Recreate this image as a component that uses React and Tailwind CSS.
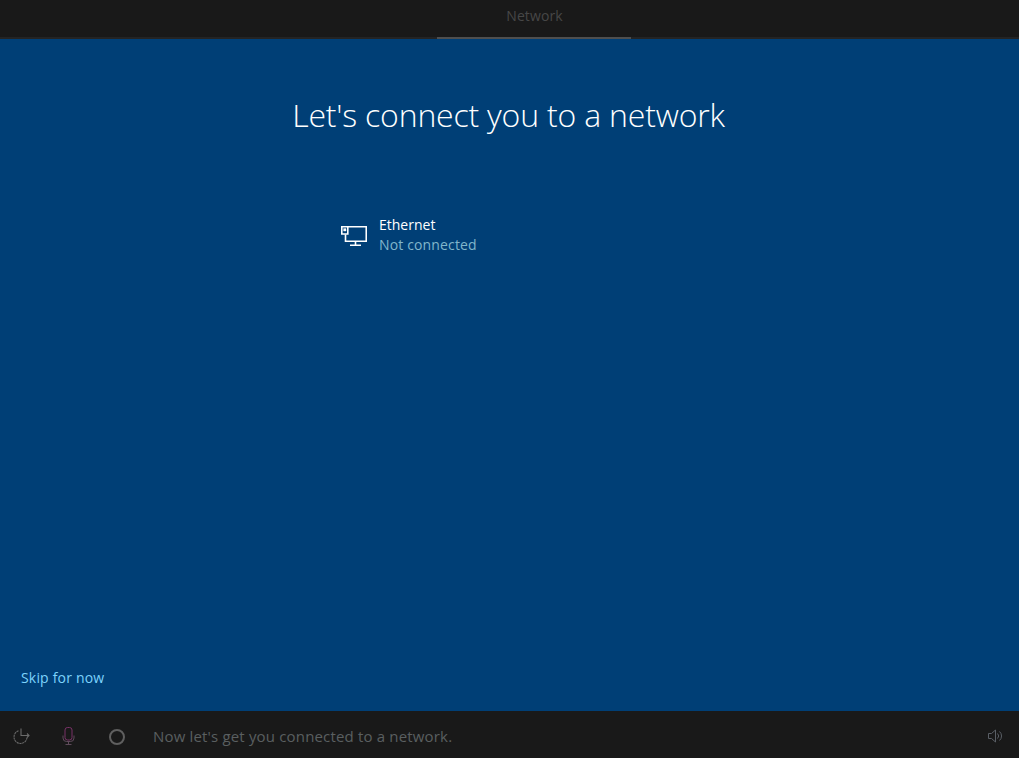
export default function App() {
  return (
    <div className="w-[1019px] h-[758px] flex flex-col bg-[#003f76] overflow-hidden font-['Open_Sans',sans-serif]">
      <div className="h-[39px] shrink-0 bg-[#191919] flex pl-[437px] border-b-2 border-[#242424]">
        <div className="w-[194px] h-[39px] border-b-2 border-[#4f4f4f] text-center text-[14px] leading-[32px] text-[#474747] pl-[1px] tracking-[0.1px]">Network</div>
      </div>
      <div className="flex-1 flex flex-col relative">
        <h1 className="text-[32px] leading-[44px] font-light text-white text-center mt-[54px] pr-[2px] tracking-[-0.19px]">Let's connect you to a network</h1>
        <div className="flex items-center ml-[341px] mt-[78px] gap-[12px]">
          <svg width="26" height="21" viewBox="0 0 26 21" fill="none" stroke="#fff" strokeWidth="1.6">
            <path d="M7 1.75h18.25v14.5H4.5V9.5" />
            <path d="M.8 1.75h6v7.2h-6z" />
            <path d="M2.6 3.6h2.4v2.4H2.6z" fill="#fff" strokeWidth="0.4" />
            <path d="M14.5 16.5v3.7M9 20.2h11" />
          </svg>
          <div className="flex flex-col">
            <span className="text-[14px] leading-[20px] text-white">Ethernet</span>
            <span className="text-[14px] leading-[20px] text-[#80b6cc] tracking-[0.15px]">Not connected</span>
          </div>
        </div>
        <div className="mt-auto mb-[23px] ml-[21px] text-[14px] leading-[20px] text-[#7dd3fc] tracking-[0.18px]">Skip for now</div>
      </div>
      <div className="h-[47px] shrink-0 bg-[#191919] flex items-center">
        <svg className="ml-[13px] mt-[5px]" width="17" height="18" viewBox="0 0 17 18" fill="none" stroke="#6a6a6a" strokeWidth="1.1">
          <path d="M5.5 2.8A6.5 6.5 0 1 0 14 9.5" strokeDasharray="2.2 .6" />
          <path d="M8 0.5V7.5H16M14 5.5l2 2-2 2" />
        </svg>
        <svg className="ml-[30px] mt-[3px]" width="16" height="19" viewBox="0 0 16 19" fill="none" strokeWidth="1">
          <rect x="5" y="0.5" width="7" height="12.5" rx="2.5" stroke="#7a3268" />
          <path d="M3 8.5v2.5a3.5 3.5 0 0 0 3.5 3.5h4a3.5 3.5 0 0 0 3.5-3.5V8.5M8.5 14.5v3M5.5 17.5h6" stroke="#5e4a5a" />
        </svg>
        <div className="ml-[33px] mt-[4px] w-[16px] h-[16px] rounded-full border-2 border-[#5f5f5f]" />
        <span className="ml-[28px] mt-[3px] text-[15px] leading-[20px] text-[#5a5f60] tracking-[0.17px]">Now let's get you connected to a network.</span>
        <svg className="ml-auto mr-[16px] mt-[3px]" width="15" height="14" viewBox="0 0 15 14" fill="none" stroke="#5a5f66" strokeWidth="1">
          <path d="M.5 4.5h3L7.5 1v12l-4-3.5h-3z" />
          <path d="M9.5 4.5a3.5 3.5 0 0 1 0 5M11.5 2.5a6 6 0 0 1 0 9" />
        </svg>
      </div>
    </div>
  );
}
